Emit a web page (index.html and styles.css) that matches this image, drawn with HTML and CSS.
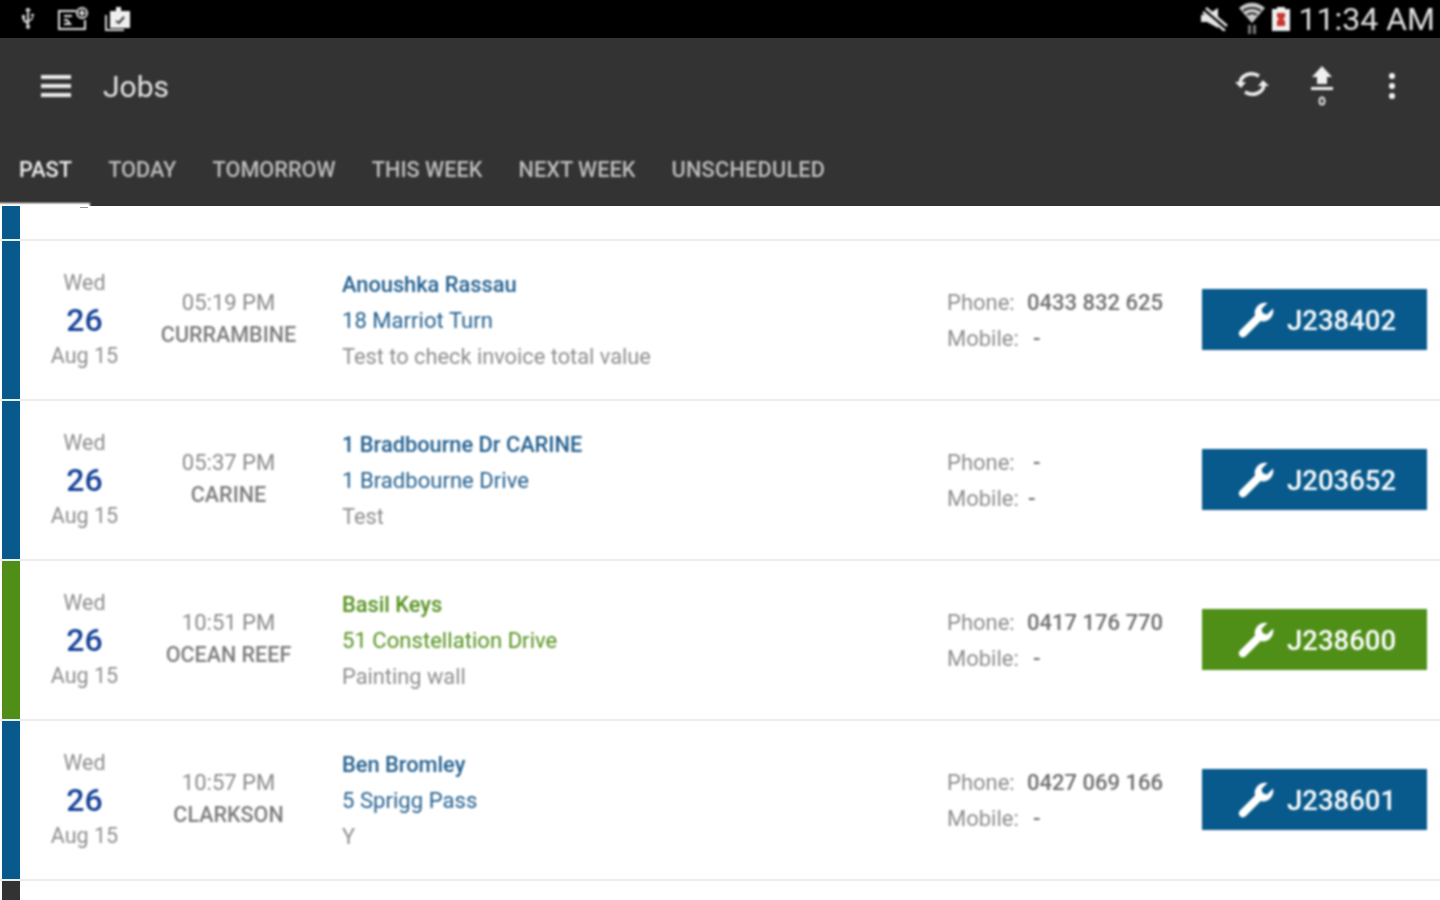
FILE: index.html
```html
<!DOCTYPE html>
<html lang="en">
<head>
<meta charset="utf-8">
<title>Jobs</title>
<link rel="stylesheet" href="styles.css">
</head>
<body>
<svg class="defs" width="0" height="0" aria-hidden="true">
  <symbol id="wrench" viewBox="0 0 36 36">
    <path fill="#fff" d="M35 6.5c.9 3.600-.1 7.400-2.800 10-2.600 2.500-6.100 3.400-9.400 2.600L7.600 34.300c-1.600 1.500-4.100 1.500-5.600 0-1.600-1.600-1.600-4.100 0-5.700L17 13.500c-.9-3.500 0-7.200 2.700-9.800C22.300 1.100 26 .1 29.500 1l-6 6 1.300 4.300 4.200 1.200z"/>
  </symbol>
</svg>
<header class="appbar">
  <div class="status">
    <div class="status-left">
      <svg class="si si-usb" viewBox="0 0 16 22"><path fill="#d8d8d8" d="M7 0h2l2 3H9v9l3-2V8h-1V6h3v2h-1v3l-4 3v3a2 2 0 1 1-2 0v-1L3 13v-2H2V7h3v4H4l3 2V3H5z"/></svg>
      <svg class="si si-card" viewBox="0 0 32 26"><g fill="none" stroke="#e2e2e2" stroke-width="2"><path d="M19 5H2v18h26V14"/><path d="M7 10h8M7 14h3l3 4H7"/><circle cx="25" cy="7" r="5"/></g><path fill="#e2e2e2" d="M24 4h2v6h-2zM22 6h6v2h-6z"/></svg>
      <svg class="si si-clip" viewBox="0 0 28 28"><path fill="none" stroke="#d8d8d8" stroke-width="2" d="M2 10v15h18"/><path fill="#efefef" d="M6 6h6V2h5v4h9v17H6z"/><path fill="none" stroke="#333" stroke-width="2" d="M12 16l3 2 5-6"/></svg>
    </div>
    <div class="status-right">
      <svg class="si si-mute" viewBox="0 0 28 24"><path fill="#e6e6e6" d="M1 8h6l11-7v20L7 15H1z"/><path stroke="#000" stroke-width="2.500" d="M3 2l24 20"/><path stroke="#e6e6e6" stroke-width="2.500" d="M6 1l21 18M3 5l22 19"/></svg>
      <svg class="si si-wifi" viewBox="0 0 28 34"><path fill="#c9c9c9" d="M1 6C9-1 19-1 27 6l-13 15z"/><path fill="none" stroke="#000" stroke-width="1.500" d="M5 9c5-4 13-4 18 0M9 13c3-2 7-2 10 0"/><path fill="#777" d="M10 23h3v9h-3zM15 23h3v9h-3z"/></svg>
      <svg class="si si-batt" viewBox="0 0 18 24"><path fill="#efefef" d="M5 0h8v2h5v22H0V2h5z"/><path fill="#c8372d" d="M5 6h8v4l-2 2 2 2v5H5v-5l2-2-2-2z"/></svg>
      <span class="clock">11:34 AM</span>
    </div>
  </div>
  <div class="toolbar">
    <div class="title-group">
      <svg class="menu" viewBox="0 0 30 22"><path fill="#ececec" d="M0 0h30v4H0zM0 9h30v4H0zM0 18h30v4H0z"/></svg>
      <h1 class="title">Jobs</h1>
    </div>
    <div class="actions">
      <svg class="act act-sync" viewBox="0 0 34 30"><g fill="none" stroke="#f0f0f0" stroke-width="3.500"><path d="M5 13C7 6 16 2 24 7"/><path d="M29 17c-2 7-11 11-19 6"/></g><path fill="#f0f0f0" d="M0 13h11l-5 6zM34 17H23l5-6z"/></svg>
      <svg class="act act-up" viewBox="0 0 22 42"><path fill="#f0f0f0" d="M11 0l10 11h-5v7H6v-7H1zM0 21h22v3H0z"/><ellipse cx="11" cy="35" rx="2.500" ry="3.500" fill="none" stroke="#ddd" stroke-width="2"/></svg>
      <svg class="act act-more" viewBox="0 0 6 26"><circle cx="3" cy="3" r="3" fill="#f4f4f4"/><circle cx="3" cy="13" r="3" fill="#f4f4f4"/><circle cx="3" cy="23" r="3" fill="#f4f4f4"/></svg>
    </div>
  </div>
  <nav class="tabs">
    <span class="tab tab-active">PAST</span>
    <span class="tab">TODAY</span>
    <span class="tab">TOMORROW</span>
    <span class="tab">THIS WEEK</span>
    <span class="tab">NEXT WEEK</span>
    <span class="tab tab-last">UNSCHEDULED</span>
  </nav>
</header>
<main class="list">
  <div class="stub stub-first"><span class="stripe blue"></span></div>

  <article class="row">
    <span class="stripe blue"></span>
    <div class="date"><span class="dow">Wed</span><span class="day">26</span><span class="mon">Aug 15</span></div>
    <div class="when"><span class="time">05:19 PM</span><span class="suburb">CURRAMBINE</span></div>
    <div class="info blue-text"><span class="name">Anoushka Rassau</span><span class="addr">18 Marriot Turn</span><span class="note">Test to check invoice total value</span></div>
    <div class="contact"><p class="line"><span class="lbl">Phone:</span><b class="num">0433 832 625</b></p><p class="line"><span class="lbl">Mobile:</span><b class="num dash">-</b></p></div>
    <a class="job blue"><svg class="wrench"><use href="#wrench"/></svg>J238402</a>
  </article>

  <article class="row">
    <span class="stripe blue"></span>
    <div class="date"><span class="dow">Wed</span><span class="day">26</span><span class="mon">Aug 15</span></div>
    <div class="when"><span class="time">05:37 PM</span><span class="suburb">CARINE</span></div>
    <div class="info blue-text"><span class="name">1 Bradbourne Dr CARINE</span><span class="addr">1 Bradbourne Drive</span><span class="note">Test</span></div>
    <div class="contact"><p class="line"><span class="lbl">Phone:</span><b class="num dash">-</b></p><p class="line"><span class="lbl">Mobile:</span><b class="num dash tight">-</b></p></div>
    <a class="job blue"><svg class="wrench"><use href="#wrench"/></svg>J203652</a>
  </article>

  <article class="row">
    <span class="stripe green"></span>
    <div class="date"><span class="dow">Wed</span><span class="day">26</span><span class="mon">Aug 15</span></div>
    <div class="when"><span class="time">10:51 PM</span><span class="suburb">OCEAN REEF</span></div>
    <div class="info green-text"><span class="name">Basil Keys</span><span class="addr">51 Constellation Drive</span><span class="note">Painting wall</span></div>
    <div class="contact"><p class="line"><span class="lbl">Phone:</span><b class="num">0417 176 770</b></p><p class="line"><span class="lbl">Mobile:</span><b class="num dash">-</b></p></div>
    <a class="job green"><svg class="wrench"><use href="#wrench"/></svg>J238600</a>
  </article>

  <article class="row">
    <span class="stripe blue"></span>
    <div class="date"><span class="dow">Wed</span><span class="day">26</span><span class="mon">Aug 15</span></div>
    <div class="when"><span class="time">10:57 PM</span><span class="suburb">CLARKSON</span></div>
    <div class="info blue-text"><span class="name">Ben Bromley</span><span class="addr">5 Sprigg Pass</span><span class="note">Y</span></div>
    <div class="contact"><p class="line"><span class="lbl">Phone:</span><b class="num">0427 069 166</b></p><p class="line"><span class="lbl">Mobile:</span><b class="num dash">-</b></p></div>
    <a class="job blue"><svg class="wrench"><use href="#wrench"/></svg>J238601</a>
  </article>

  <div class="stub stub-end"><span class="stripe dark"></span></div>
</main>
</body>
</html>
```

FILE: styles.css
```css
* { box-sizing: border-box; }
html, body { margin: 0; height: 100%; overflow: hidden; background: #fff; }
body { font-family: Roboto, "Liberation Sans", sans-serif; width: 1440px; height: 900px; }
.defs { display: block; height: 0; }

.appbar { height: 206px; background: #333; display: flex; flex-direction: column; overflow: hidden; }
.status { height: 38px; background: #000; display: flex; justify-content: space-between; align-items: center; padding: 0 5px 0 20px; }
.status-left, .status-right { display: flex; align-items: center; filter: blur(.8px); }
.si { display: block; }
.si-usb { width: 16px; height: 22px; margin-right: 21px; }
.si-card { width: 32px; height: 26px; margin-right: 15px; }
.si-clip { width: 28px; height: 28px; }
.si-mute { width: 28px; height: 24px; margin-right: 10px; margin-left: -2px; }
.si-wifi { width: 28px; height: 34px; margin-right: 6px; }
.si-batt { width: 18px; height: 24px; margin-right: 9px; }
.clock { color: #e0e0e0; font-size: 32px; line-height: 38px; white-space: nowrap; }

.toolbar { height: 98px; display: flex; justify-content: space-between; align-items: center; padding: 0 45px 3px 41px; }
.title-group { display: flex; align-items: center; filter: blur(.8px); }
.menu { width: 30px; height: 22px; display: block; margin-right: 32px; }
.title { margin: 2px 0 0; color: #e6e6e6; font-size: 30px; font-weight: 400; }
.actions { display: flex; align-items: center; filter: blur(.8px); }
.act { display: block; }
.act-sync { width: 34px; height: 30px; margin-right: 42px; margin-bottom: 3px; }
.act-up { width: 22px; height: 42px; margin-right: 56px; margin-top: 3px; }
.act-more { width: 6px; height: 26px; }

.tabs { flex: 1; display: flex; gap: 36.200px; padding: 0 0 0 19px; align-items: center; position: relative; filter: blur(.8px); }
.tab { color: #bdbdbd; font-size: 21.700px; font-weight: 500; line-height: 26px; white-space: nowrap; margin-top: -2px; }
.tab-active { color: #eee; }
.tab-active::after { content: ""; position: absolute; left: -4px; bottom: -2px; width: 94px; height: 5px; background: #fff; }
.tab-last { letter-spacing: .25px; }

.list { display: flex; flex-direction: column; }
.stripe { display: block; width: 18px; margin-left: 2px; align-self: stretch; flex: none; filter: blur(.5px); }
.blue { background: #085a8c; }
.green { background: #4f8f17; }
.dark { background: #333; }
.stub { height: 35px; display: flex; border-bottom: 2px solid #ececec; }
.stub-first { position: relative; }
.stub-first::after { content: ""; position: absolute; left: 80px; top: 1px; width: 8px; height: 1px; background: #999; }
.stub-end { border-bottom: 0; height: 20px; }

.row { height: 160px; display: flex; align-items: center; border-bottom: 2px solid #ececec; padding-right: 13px; }
.date { width: 129px; flex: none; display: flex; flex-direction: column; align-items: center; color: #8e8e8e; font-size: 21.500px; line-height: 36.500px; filter: blur(.8px); }
.day { color: #143f96; font-size: 32px; font-weight: 500; }
.when { width: 159px; flex: none; display: flex; flex-direction: column; align-items: center; color: #8a8a8a; font-size: 22px; line-height: 32px; margin-bottom: 2px; filter: blur(.8px); }
.suburb { font-size: 21.500px; font-weight: 500; color: #7c7c7c; }
.info { flex: 1; margin-left: 34px; margin-top: 2px; display: flex; flex-direction: column; font-size: 22px; line-height: 36px; min-width: 0; filter: blur(.8px); }
.name { font-weight: 500; font-size: 21.800px; }
.addr { letter-spacing: .05px; }
.note { color: #8e8e8e; font-size: 21.800px; }
.blue-text { color: #23608f; }
.green-text { color: #55921e; }
.contact { width: 255px; flex: none; color: #8e8e8e; font-size: 22px; line-height: 36px; margin-top: 2px; filter: blur(.8px); }
.line { margin: 0; display: flex; white-space: nowrap; }
.lbl { width: 80px; flex: none; }
.num { color: #6e6e6e; font-weight: 500; }
.dash { margin-left: 6px; }
.tight { margin-left: 1px; }
.job { width: 225px; height: 61px; margin-bottom: 1px; padding-top: 1px; flex: none; display: flex; align-items: center; padding-left: 36px; color: #fff; font-size: 27.500px; font-weight: 500; filter: blur(.8px); }
.wrench { width: 36px; height: 36px; margin-right: 13px; flex: none; }
```
